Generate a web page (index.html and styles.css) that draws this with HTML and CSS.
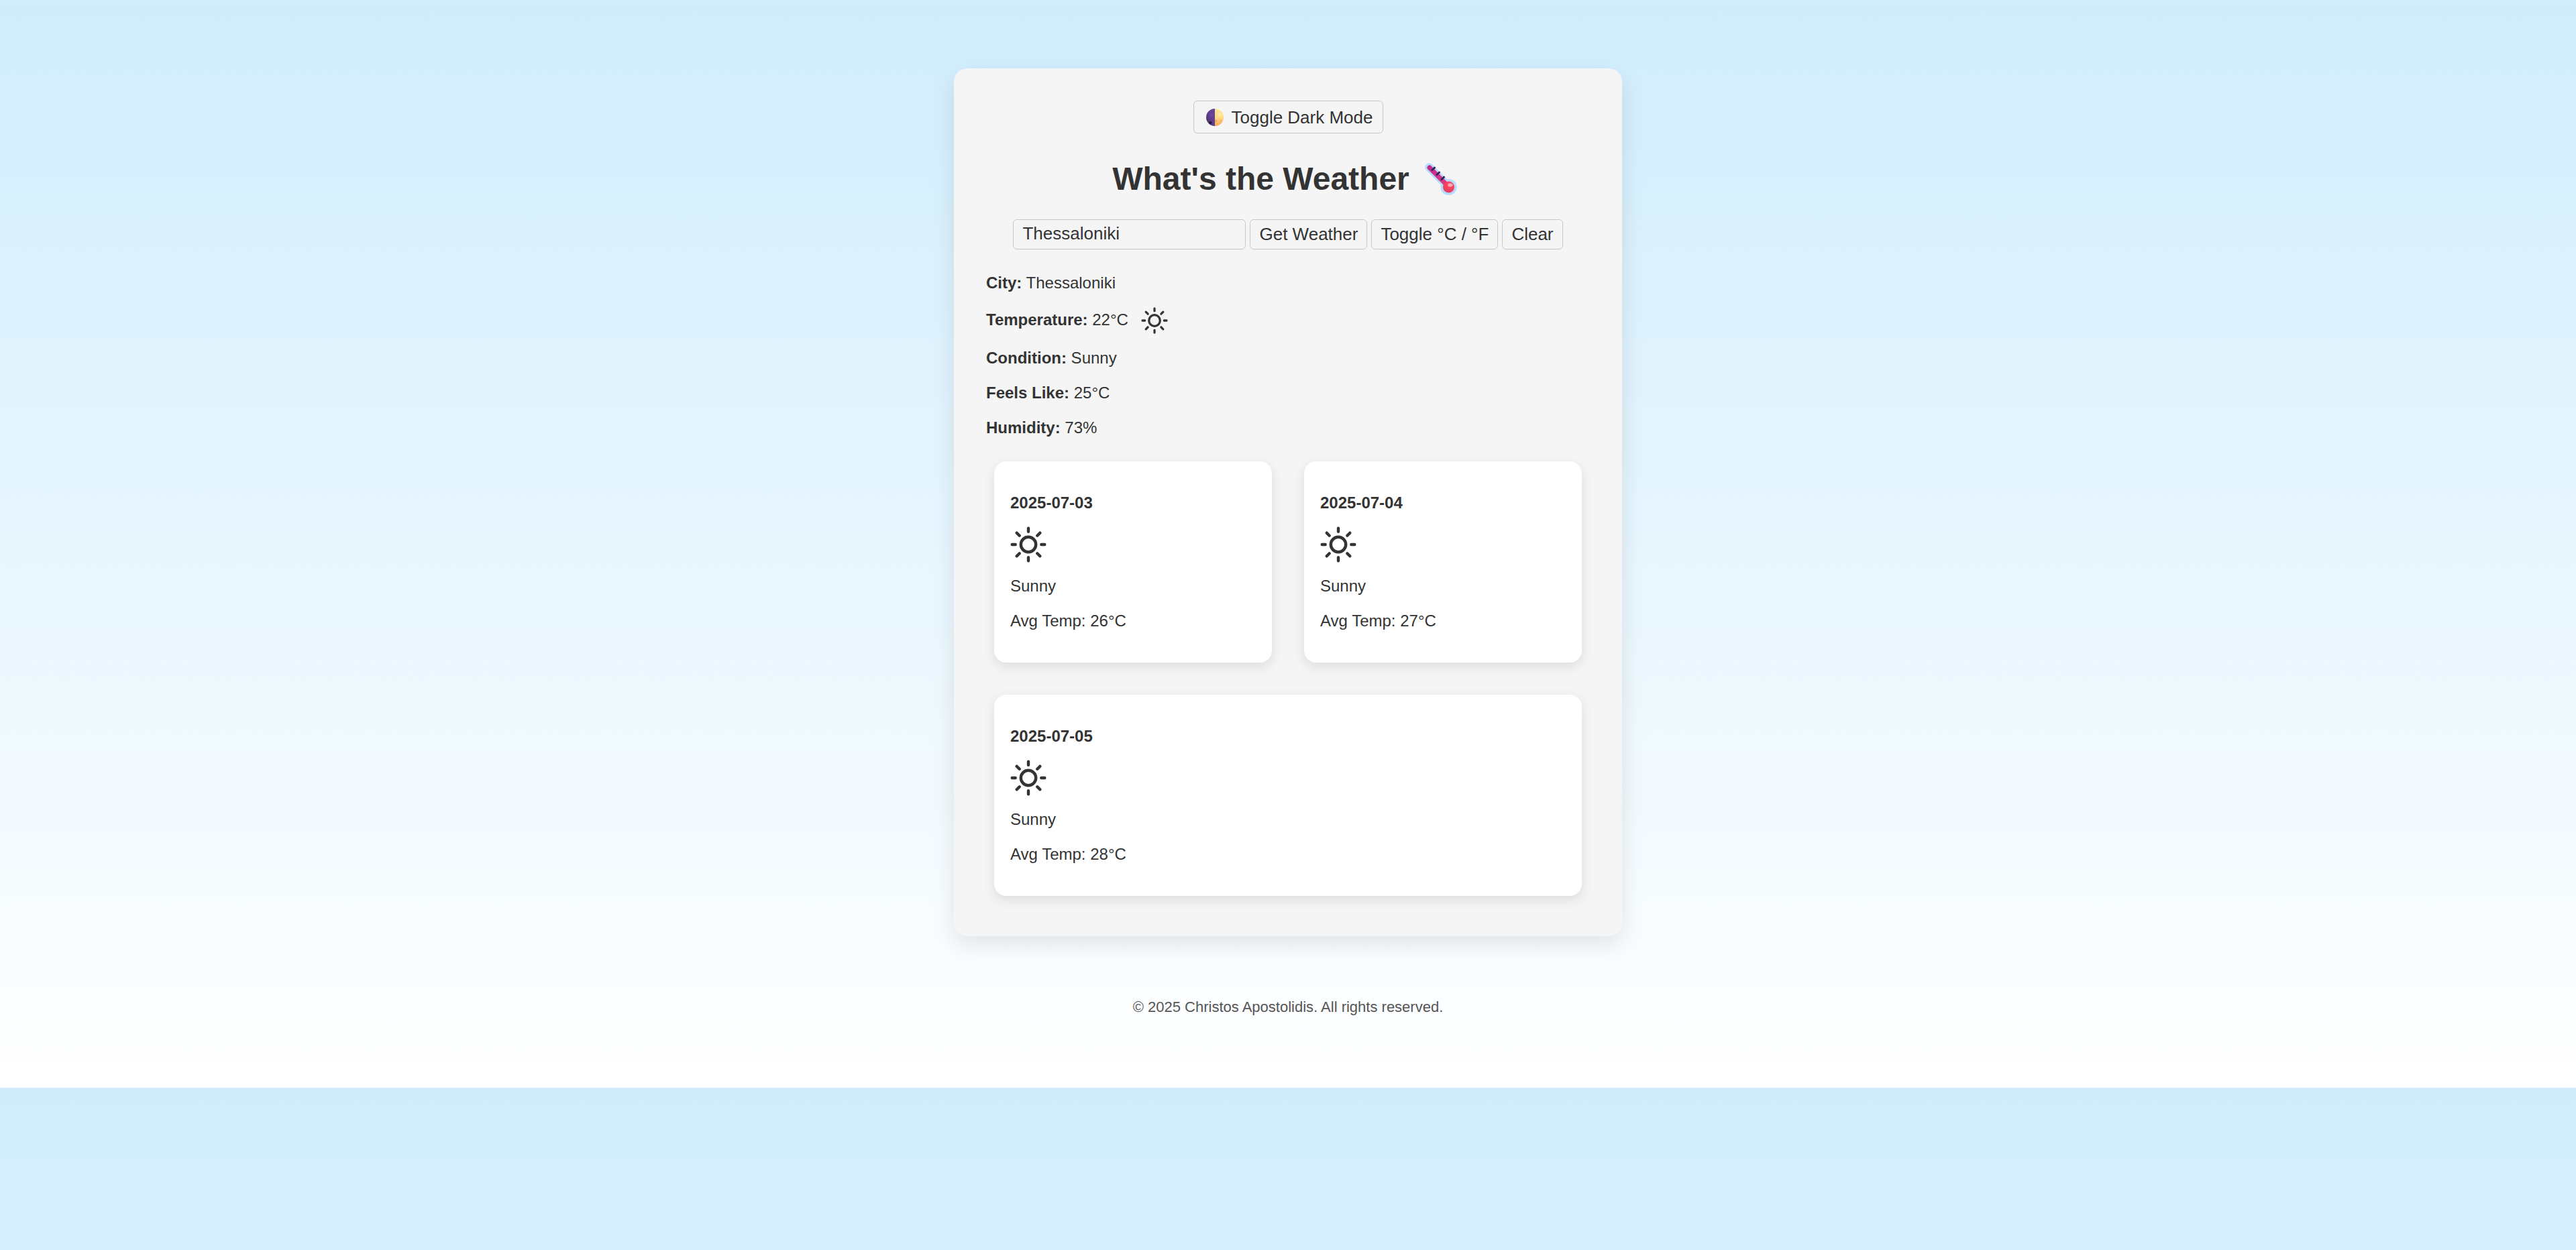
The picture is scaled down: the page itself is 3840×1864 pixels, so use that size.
FILE: index.html
```html
<!DOCTYPE html>
<html lang="en">
<head>
<meta charset="utf-8">
<meta name="viewport" content="width=device-width, initial-scale=1">
<title>What's the Weather</title>
<link rel="stylesheet" href="styles.css">
</head>
<body>
<svg class="sprite" aria-hidden="true">
  <symbol id="sun" viewBox="-27 -27 54 54">
    <g fill="none" stroke="currentColor" stroke-width="4.400" stroke-linecap="round">
      <circle r="11.200"/>
      <path d="M0-24.300v5M0 19.300v5M-24.300 0h5M19.300 0h5M-17.300-17.300l4 4M17.300-17.300l-4 4M-17.300 17.300l4-4M17.300 17.300l-4-4"/>
    </g>
  </symbol>
</svg>
<main class="app">
  <button class="control control-theme" type="button">
    <svg class="moon" viewBox="0 0 26 26" aria-hidden="true">
      <defs>
        <linearGradient id="moon-light" x1="0" y1="0" x2="0" y2="1"><stop offset="0" stop-color="#ffe69a"/><stop offset=".5" stop-color="#ffdc85"/><stop offset="1" stop-color="#f9a45c"/></linearGradient>
        <linearGradient id="moon-dark" x1="1" y1="0" x2="0" y2="1"><stop offset="0" stop-color="#6a4a9c"/><stop offset=".6" stop-color="#5a3d85"/><stop offset="1" stop-color="#40305c"/></linearGradient>
      </defs>
      <path d="M13 0a13 13 0 0 0 0 26z" fill="url(#moon-dark)"/>
      <path d="M13 0a13 13 0 0 1 0 26z" fill="url(#moon-light)"/>
      <circle cx="8" cy="10" r="2.600" fill="#6b4a9b"/>
      <circle cx="6.500" cy="21" r="2" fill="#221833"/>
      <circle cx="20" cy="9" r="2.400" fill="#ffeaa8"/>
      <circle cx="14.500" cy="18.500" r="1.700" fill="#ef9f5c"/>
      <circle cx="21.500" cy="18" r="1.300" fill="#f1ae62"/>
    </svg>
    Toggle Dark Mode
  </button>

  <h1 class="title">What's the Weather
    <svg class="thermometer" viewBox="0 0 48 48" aria-hidden="true">
      <defs>
        <linearGradient id="mercury" x1="0" y1="0" x2="1" y2="1"><stop offset="0" stop-color="#c22d8c"/><stop offset="1" stop-color="#e03c84"/></linearGradient>
        <radialGradient id="bulb" cx=".6" cy=".3" r=".7"><stop offset="0" stop-color="#ff8f9e"/><stop offset=".35" stop-color="#f8465c"/><stop offset="1" stop-color="#e93c68"/></radialGradient>
      </defs>
      <g stroke-linecap="round" fill="none">
        <path d="M6.500 6.500L33 33" stroke="#b5dcfc" stroke-width="12.500"/>
        <circle cx="35.500" cy="36" r="12" fill="#b5dcfc"/>
        <path d="M7 7L33 33" stroke="url(#mercury)" stroke-width="7"/>
        <path d="M14.500 7l-3.500 3.500M21.500 14l-3.500 3.500M28.500 21l-3.500 3.500" stroke="#33265c" stroke-width="3"/>
      </g>
      <circle cx="35.500" cy="36" r="8.500" fill="url(#bulb)"/>
      <ellipse cx="38" cy="33" rx="3.500" ry="2.500" fill="#ffa9b2"/>
    </svg>
  </h1>

  <form class="search">
    <input class="control search-city" type="text" value="Thessaloniki" aria-label="City">
    <button class="control" type="button">Get Weather</button>
    <button class="control" type="button">Toggle °C / °F</button>
    <button class="control" type="button">Clear</button>
  </form>

  <section class="current">
    <p><strong>City:</strong> Thessaloniki</p>
    <p><strong>Temperature:</strong> 22°C <svg class="sun-small" aria-hidden="true"><use href="#sun"/></svg></p>
    <p><strong>Condition:</strong> Sunny</p>
    <p><strong>Feels Like:</strong> 25°C</p>
    <p><strong>Humidity:</strong> 73%</p>
  </section>

  <section class="forecast">
    <article class="day">
      <p><strong>2025-07-03</strong></p>
      <svg class="sun-large" aria-hidden="true"><use href="#sun"/></svg>
      <p>Sunny</p>
      <p>Avg Temp: 26°C</p>
    </article>
    <article class="day">
      <p><strong>2025-07-04</strong></p>
      <svg class="sun-large" aria-hidden="true"><use href="#sun"/></svg>
      <p>Sunny</p>
      <p>Avg Temp: 27°C</p>
    </article>
    <article class="day">
      <p><strong>2025-07-05</strong></p>
      <svg class="sun-large" aria-hidden="true"><use href="#sun"/></svg>
      <p>Sunny</p>
      <p>Avg Temp: 28°C</p>
    </article>
  </section>
</main>
<footer class="footer">© 2025 Christos Apostolidis. All rights reserved.</footer>
</body>
</html>
```

FILE: styles.css
```css
* {
  box-sizing: border-box;
}

body {
  margin: 0;
  padding: 102px 24px 104px;
  display: flex;
  flex-direction: column;
  align-items: center;
  gap: 90px;
  background: linear-gradient(to bottom, #d0edfd, #ffffff);
  color: #333333;
  font-family: Arial, "Liberation Sans", sans-serif;
  font-size: 24px;
  line-height: 28px;
}

p {
  margin: 0;
}

.sprite {
  position: absolute;
  width: 0;
  height: 0;
}

.app {
  display: flex;
  flex-direction: column;
  width: 100%;
  max-width: 996px;
  padding: 48px;
  border-radius: 20px;
  background: #f5f5f5;
  box-shadow: 0 12px 36px rgba(0, 0, 0, 0.1);
}

.control {
  height: 45px;
  padding: 0 13px 2px;
  border: 1px solid #c8c8c8;
  border-radius: 6px;
  background: #f5f5f5;
  color: #333333;
  font-family: inherit;
  font-size: 26px;
  line-height: 30px;
  white-space: nowrap;
}

.control-theme {
  display: flex;
  align-items: center;
  align-self: center;
  gap: 12px;
  height: 49px;
  padding: 0 14px 0 18px;
}

.moon {
  width: 26px;
  height: 26px;
}

.title {
  display: flex;
  align-items: center;
  justify-content: center;
  gap: 23px;
  margin: 40px 0 32px;
  padding-right: 10px;
  font-size: 48px;
  line-height: 56px;
}

.thermometer {
  width: 48px;
  height: 48px;
}

.search {
  display: flex;
  flex-wrap: wrap;
  justify-content: center;
  gap: 6px;
  margin-bottom: 36px;
}

.search-city {
  width: 347px;
}

.current {
  display: flex;
  flex-direction: column;
  gap: 24px;
}

.sun-small {
  width: 40px;
  height: 40px;
  margin: -2px 0 -2px 12px;
  vertical-align: -11px;
}

.forecast {
  display: flex;
  flex-wrap: wrap;
  gap: 48px;
  margin-top: 24px;
  padding: 12px;
}

.day {
  display: flex;
  flex: 1 1 360px;
  flex-direction: column;
  gap: 24px;
  padding: 48px 24px;
  border-radius: 18px;
  background: #ffffff;
  box-shadow: 0 6px 18px rgba(0, 0, 0, 0.1);
}

.sun-large {
  width: 54px;
  height: 54px;
  margin: -3px 0;
}

.footer {
  color: #555555;
  font-size: 22px;
  line-height: 32px;
  text-align: center;
}
```
